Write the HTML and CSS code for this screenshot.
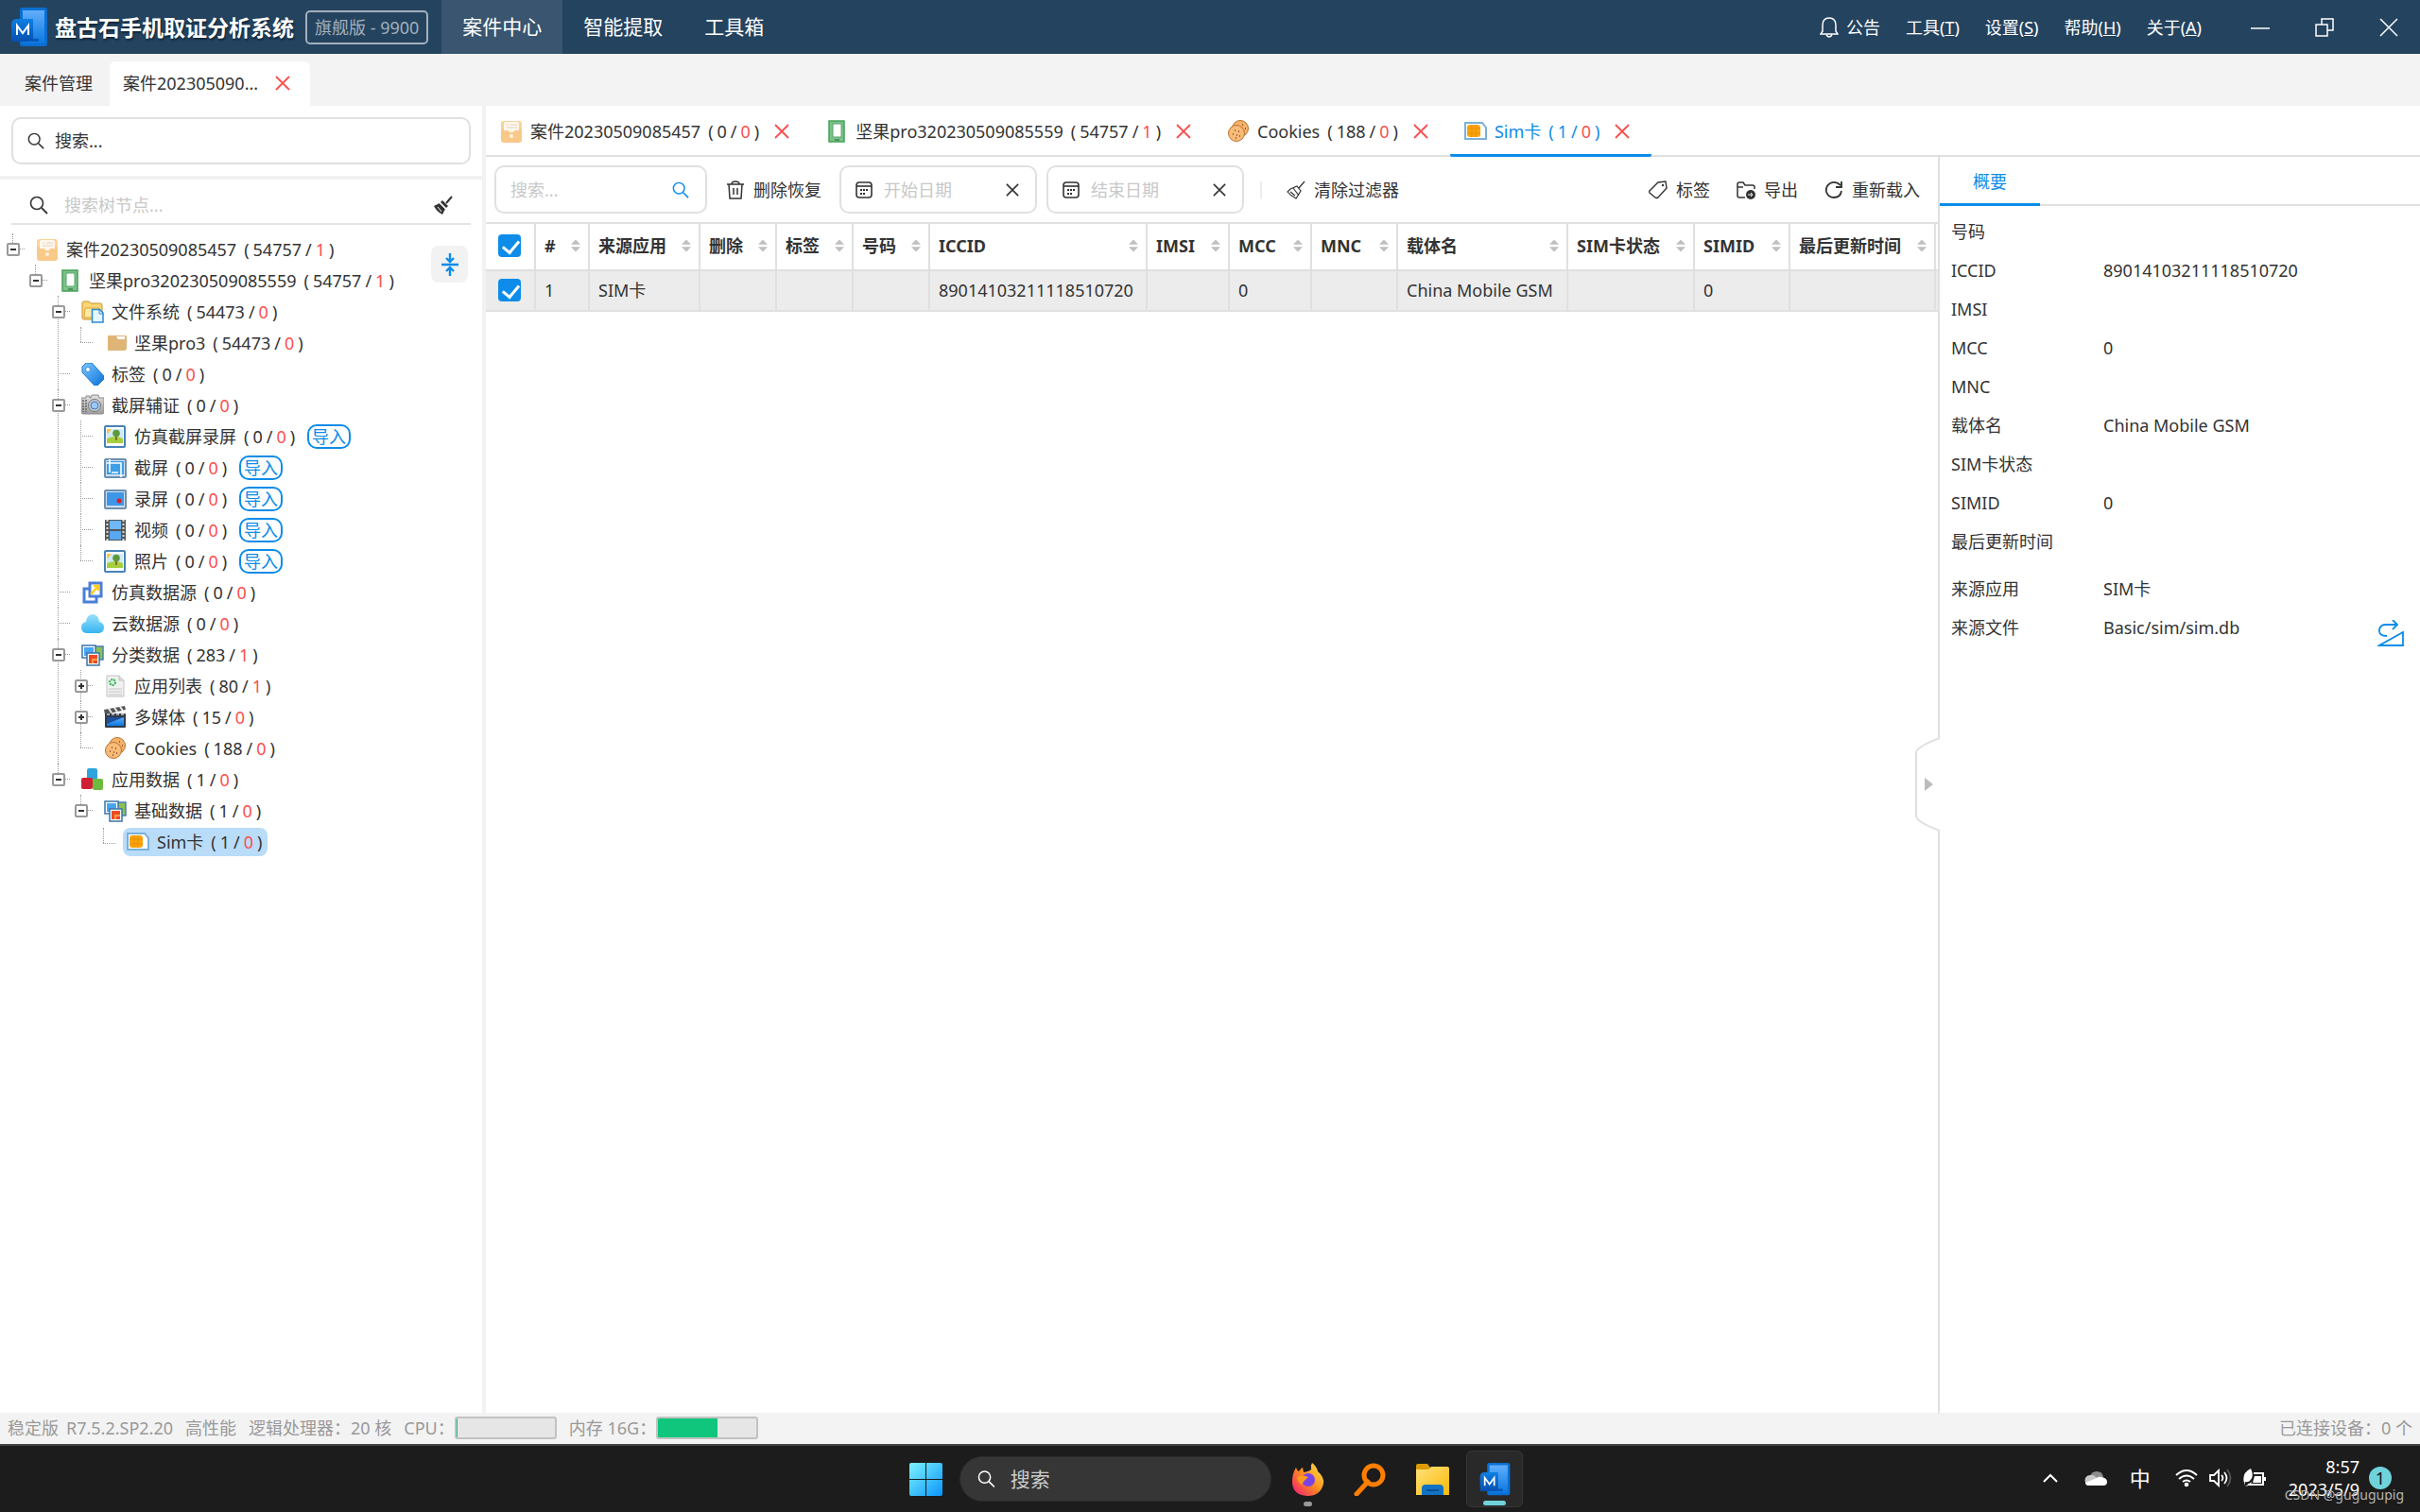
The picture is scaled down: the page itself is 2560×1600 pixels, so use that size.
FILE: index.html
```
<!DOCTYPE html>
<html lang="zh-CN">
<head>
  <meta charset="UTF-8" />
  <meta name="viewport" content="width=device-width, initial-scale=1.0"/>
  <title>盘古石手机取证分析系统</title>
  <link rel="stylesheet" href="styles.css">
</head>
<body>

  <!-- Icon sprite -->
  <svg class="sprite" width="0" height="0" aria-hidden="true">
    <defs>
      <linearGradient id="gBlue" x1="0" y1="0" x2="0" y2="1"><stop offset="0" stop-color="#62aefc"/><stop offset="1" stop-color="#0b78e0"/></linearGradient>
      <linearGradient id="gDeep" x1="0" y1="0" x2="0" y2="1"><stop offset="0" stop-color="#0d7fe4"/><stop offset="1" stop-color="#0650b0"/></linearGradient>
      <linearGradient id="gTag" x1="0" y1="0" x2="1" y2="1"><stop offset="0" stop-color="#7cc8ff"/><stop offset="1" stop-color="#0a72d8"/></linearGradient>
      <linearGradient id="gCloud" x1="0" y1="0" x2="0" y2="1"><stop offset="0" stop-color="#9be0fb"/><stop offset="1" stop-color="#35b5f0"/></linearGradient>
      <linearGradient id="gWin" x1="0" y1="0" x2="1" y2="1"><stop offset="0" stop-color="#7df3ff"/><stop offset="1" stop-color="#0a95fb"/></linearGradient>
      <linearGradient id="gFox" x1="1" y1="0" x2="0" y2="1"><stop offset="0" stop-color="#fff04a"/><stop offset=".5" stop-color="#ff8a1f"/><stop offset="1" stop-color="#f0147c"/></linearGradient>
      <linearGradient id="gFolder" x1="0" y1="0" x2="1" y2="1"><stop offset="0" stop-color="#ffe27a"/><stop offset="1" stop-color="#fbb90a"/></linearGradient>
      <linearGradient id="gCam" x1="0" y1="0" x2="0" y2="1"><stop offset="0" stop-color="#e2e2e2"/><stop offset="1" stop-color="#9c9c9c"/></linearGradient>
    </defs>
    <symbol id="i-logo" viewBox="0 0 38 42">
      <rect x="9" y="0" width="29" height="41" rx="3" fill="#0b6fd2"/>
      <rect x="12" y="3" width="23" height="35" fill="url(#gBlue)"/>
      <rect x="21" y="33" width="8" height="3" rx="1" fill="#0659b8"/>
      <path d="M6 12h17v20q0 4-5 4H2q-2 0-2-2V18q0-6 6-6z" fill="url(#gDeep)"/>
      <path d="M6 29V19l6 8 6-8v10" fill="none" stroke="#fff" stroke-width="2"/>
    </symbol>
    <symbol id="i-close" viewBox="0 0 16 16"><path d="M1 1l14 14M15 1L1 15" fill="none" stroke="currentColor" stroke-width="1.800"/></symbol>
    <symbol id="i-search" viewBox="0 0 20 20"><circle cx="8" cy="8" r="6.5" fill="none" stroke="currentColor" stroke-width="1.6"/><path d="M13 13l6 6" stroke="currentColor" stroke-width="1.8"/></symbol>
    <symbol id="i-bell" viewBox="0 0 20 22"><path d="M1 18h18l-2-3V9q0-8-7-8T3 9v6zM7 19q3 4 6 0" fill="none" stroke="currentColor" stroke-width="1.5"/></symbol>
    <symbol id="i-box" viewBox="0 0 24 24"><rect x="1" y="1" width="22" height="22" rx="3" fill="#fbd39b"/><path d="M1 9h22v12q0 3-3 3H4q-3 0-3-3z" fill="#f9c98a"/><path d="M4 4q0-2 2-2h12q2 0 2 2v7h-5l-1 2h-4l-1-2H4z" fill="#fff7ec"/><path d="M7 5h2M11 5h7M7 8h11" stroke="#eee0cf" stroke-width="1.5"/><circle cx="12" cy="17" r="2" fill="#fff2e0"/></symbol>
    <symbol id="i-phone" viewBox="0 0 24 24"><rect x="3" y="0" width="18" height="24" rx="1" fill="#6fba7d"/><rect x="4.500" y="1.500" width="15" height="21" fill="#7cc289" stroke="#58a468"/><rect x="8" y="4" width="9" height="14" fill="#fff" stroke="#58a468"/><path d="M10 21h5" stroke="#4b945a" stroke-width="2"/></symbol>
    <symbol id="i-fs" viewBox="0 0 24 24"><path d="M1 3q0-2 2-2h5l2 2h10q2 0 2 2v12q0 3-3 3H3q-2 0-2-2z" fill="#fbd673" stroke="#c9912c"/><path d="M4 8h15v10H3z" fill="#fde9a6" stroke="#dba53c"/><path d="M11.500 9.500h8l3.500 3.500v10H11.500z" fill="#e6f5ff" stroke="#2a8bd0" stroke-width="1.5"/><path d="M19 10v4h4" fill="none" stroke="#2a8bd0"/></symbol>
    <symbol id="i-folder" viewBox="0 0 24 24"><path d="M4 4h19q1 0 1 1v12q0 3-3 3H4z" fill="#dfb577"/><path d="M13 5h9v3h-7z" fill="#fff"/></symbol>
    <symbol id="i-label" viewBox="0 0 24 24"><path d="M1 4l4-4h6l13 14v3l-7 7h-3L1 10z" fill="url(#gTag)" stroke="#1c78cf"/><circle cx="7" cy="7" r="2.500" fill="#fff" stroke="#3f8fe0"/></symbol>
    <symbol id="i-camera" viewBox="0 0 24 24"><path d="M0 4h5V2h4v2h1l1-3h7l1 3h5v15q0 2-2 2H2q-2 0-2-2z" fill="url(#gCam)" stroke="#8a8a8a"/><path d="M2 6v13M5 6v13" stroke="#666" stroke-width="1.500" stroke-dasharray="2 1"/><circle cx="14" cy="12" r="6.500" fill="#c9c9c9" stroke="#777"/><circle cx="14" cy="12" r="4" fill="#9cc8fa" stroke="#3d79c6"/></symbol>
    <symbol id="i-photo" viewBox="0 0 24 24"><rect x="1" y="1" width="21" height="22" rx="1" fill="#fff" stroke="#4682b8" stroke-width="2"/><rect x="3" y="4" width="17" height="15" fill="#cfeafc"/><path d="M3 4h5l-5 6z" fill="#ffc53d"/><path d="M3 14q9-4 17 0v5H3z" fill="#a6cf3f"/><path d="M13 11v5" stroke="#7a4b22" stroke-width="1.500"/><circle cx="13" cy="8.500" r="3.800" fill="#5f9a3a"/></symbol>
    <symbol id="i-crop" viewBox="0 0 24 24"><rect x="1" y="3" width="22" height="19" rx="1" fill="#cfe0ee" stroke="#6c8fb0" stroke-width="2"/><rect x="3" y="5" width="18" height="14" fill="#3d9ee8"/><path d="M6 3v14M3 7h15v15M8 17h7" fill="none" stroke="#fff" stroke-width="1.600"/></symbol>
    <symbol id="i-rec" viewBox="0 0 24 24"><rect x="1" y="3" width="22" height="19" rx="1" fill="#cfe0ee" stroke="#6c8fb0" stroke-width="2"/><rect x="3" y="5" width="18" height="14" fill="#3d97e6"/><circle cx="16" cy="14" r="2.500" fill="#e01b24"/></symbol>
    <symbol id="i-film" viewBox="0 0 24 24"><rect x="1" y="1" width="22" height="22" fill="#555"/><rect x="6" y="2" width="12" height="9" fill="#6db8f7"/><rect x="6" y="13" width="12" height="9" fill="#57a8f0"/><path d="M3.500 1v22M20.500 1v22" stroke="#ddd" stroke-width="2" stroke-dasharray="2 2"/></symbol>
    <symbol id="i-copy" viewBox="0 0 24 24"><rect x="3" y="8" width="13" height="14" fill="#fff" stroke="#4a7fd8" stroke-width="3"/><rect x="9" y="2" width="12" height="14" fill="#fff" stroke="#4a7fd8" stroke-width="3"/><path d="M10 14l8-9m-5 0h5v5" fill="none" stroke="#ffcb1f" stroke-width="2.500"/></symbol>
    <symbol id="i-cloud" viewBox="0 0 24 24"><path d="M5 22Q0 21 0 16q0-5 5-6 1-8 7-8t7 8q5 1 5 6 0 5-5 6z" fill="url(#gCloud)"/></symbol>
    <symbol id="i-class" viewBox="0 0 24 24"><rect x="14" y="3" width="9" height="14" fill="#8cc152" stroke="#4a7fb0" stroke-width="1.500"/><rect x="1" y="2" width="14" height="13" fill="#fff" stroke="#3d74a8" stroke-width="1.500"/><rect x="3" y="4" width="10" height="9" fill="#48a7f5"/><rect x="6" y="10" width="13" height="13" fill="#fff" stroke="#3d74a8" stroke-width="1.500"/><rect x="8" y="12" width="9" height="9" fill="#ee4b23"/><path d="M12 21v-4h5" fill="none" stroke="#ff9a4a" stroke-width="2"/></symbol>
    <symbol id="i-doc" viewBox="0 0 24 24"><path d="M3 1h13l5 5v17H3z" fill="#f1f1f1" stroke="#c2c2c2"/><path d="M16 1v5h5" fill="#ddd" stroke="#c2c2c2"/><circle cx="9" cy="8" r="3" fill="#d4f3dc" stroke="#35b558" stroke-width="2" stroke-dasharray="2 1"/><path d="M5 15h14M5 18h14M5 21h14" stroke="#c6c6c6"/></symbol>
    <symbol id="i-clap" viewBox="0 0 24 24"><path d="M0 4l22-4 1 4-22 5z" fill="#555"/><path d="M5 3l3 4M11 2l3 4M17 1l3 4" stroke="#eee" stroke-width="2"/><rect x="1" y="8" width="22" height="15" rx="1" fill="#333c48"/><rect x="3" y="12" width="18" height="9" fill="url(#gBlue)"/><path d="M3 12h18L3 19z" fill="#1c4f9c"/><path d="M3 9h18" stroke="#ccc" stroke-width="1.500" stroke-dasharray="3 2"/></symbol>
    <symbol id="i-cookie" viewBox="0 0 24 24"><circle cx="14" cy="9" r="8.500" fill="#f6b26b" stroke="#b97330"/><circle cx="10" cy="14" r="8.500" fill="#f8bb78" stroke="#b97330"/><path d="M8 11h1M12 12h1M6 15h1M10 16h1M13 17h1M9 19h1M16 5h1M19 9h1" stroke="#7a4318" stroke-width="1.500"/></symbol>
    <symbol id="i-cubes" viewBox="0 0 24 24"><rect x="6" y="0" width="11" height="12" rx="2" fill="#2fa3dc"/><rect x="0" y="10" width="12" height="12" rx="2" fill="#d01f35"/><rect x="12" y="11" width="11" height="12" rx="2" fill="#6cbb3c"/></symbol>
    <symbol id="i-sim" viewBox="0 0 24 24"><path d="M1 3h18l4 5v12H1z" fill="#fff" stroke="#7ab0d8" stroke-width="2"/><rect x="3" y="5" width="14" height="13" rx="3" fill="#fba40a"/><path d="M3 9h14M3 14h14M8 5v13M12 5v13" stroke="#e8910a"/></symbol>
    <symbol id="i-broom" viewBox="0 0 20 20"><path d="M19 1l-6 7M4 9l7-3 4 5-5 8q-6-3-9-7zM7 8l6 8M4 12l5 4" fill="none" stroke="currentColor" stroke-width="1.200"/></symbol>
    <symbol id="i-broomf" viewBox="0 0 20 20"><path d="M19 1l-6 7" stroke="currentColor" stroke-width="2"/><path d="M9 5l6 6-2 2-6-6z" fill="currentColor"/><path d="M6 8l6 6-3 6Q3 17 0 11z" fill="currentColor"/><path d="M6 8l6 6M4 12l4 5" stroke="#fff"/></symbol>
    <symbol id="i-trash" viewBox="0 0 20 20"><path d="M1 4h18M6 4q0-3 4-3t4 3M3 4l1 15h12l1-15M8 8v7M12 8v7" fill="none" stroke="currentColor" stroke-width="1.500"/></symbol>
    <symbol id="i-cal" viewBox="0 0 18 18"><rect x="1" y="1" width="16" height="16" rx="3" fill="none" stroke="currentColor" stroke-width="1.600"/><path d="M1 5h16" stroke="currentColor" stroke-width="1.600"/><path d="M5 9h8M5 13h6" stroke="currentColor" stroke-width="2" stroke-dasharray="2 1"/></symbol>
    <symbol id="i-tag" viewBox="0 0 20 20"><path d="M1 11L10 2l8-1 1 7-9 10q-2 1-3 0l-6-5q-1-1 0-2z" fill="none" stroke="currentColor" stroke-width="1.400"/><circle cx="15" cy="5" r="1.200" fill="currentColor"/></symbol>
    <symbol id="i-export" viewBox="0 0 20 20"><path d="M9 18H3q-2 0-2-2V4q0-2 2-2h4l2 3h8q2 0 2 2v2M1 7h6" fill="none" stroke="currentColor" stroke-width="1.500"/><circle cx="15" cy="15" r="5" fill="currentColor"/><path d="M12 15h5m-2-2l2 2-2 2" fill="none" stroke="#fff"/></symbol>
    <symbol id="i-reload" viewBox="0 0 20 20"><path d="M17 5q-5-5-11-2-5 3-4 9 2 6 8 6 7 0 8-7M18 1v6h-6" fill="none" stroke="currentColor" stroke-width="1.800"/></symbol>
    <symbol id="i-collapse" viewBox="0 0 20 24"><path d="M1 12h18M10 0v8M6 5l4 4 4-4M10 24v-8M6 19l4-4 4 4" fill="none" stroke="currentColor" stroke-width="2.400"/></symbol>
    <symbol id="i-jump" viewBox="0 0 28 28"><path d="M10 17Q1 17 2 10q1-5 7-5h12M16 0l5 5-5 5M2 27h25V13z" fill="none" stroke="currentColor" stroke-width="1.800"/></symbol>
  </svg>

  <!-- Title bar -->
  <header class="titlebar">
    <svg class="logo"><use href="#i-logo"/></svg>
    <h1 class="app-name">盘古石手机取证分析系统</h1>
    <span class="edition">旗舰版 - 9900</span>
    <nav class="main-nav">
      <button class="nav-item active">案件中心</button>
      <button class="nav-item">智能提取</button>
      <button class="nav-item">工具箱</button>
    </nav>
    <div class="menu">
      <button><svg class="icon"><use href="#i-bell"/></svg>公告</button>
      <button>工具(<u>T</u>)</button>
      <button>设置(<u>S</u>)</button>
      <button>帮助(<u>H</u>)</button>
      <button>关于(<u>A</u>)</button>
    </div>
    <div class="window-buttons">
      <button aria-label="最小化"><svg viewBox="0 0 20 20"><path d="M0 11h20" stroke="#fff" stroke-width="1.500"/></svg></button>
      <button aria-label="还原"><svg viewBox="0 0 20 20"><path d="M1 7h12v12H1zM7 7V1h12v12h-6" fill="none" stroke="#fff" stroke-width="1.500"/></svg></button>
      <button aria-label="关闭"><svg viewBox="0 0 20 20"><path d="M1 1l18 18M19 1L1 19" stroke="#fff" stroke-width="1.500"/></svg></button>
    </div>
  </header>

  <!-- Case tabs -->
  <div class="case-tabs">
    <button class="case-tab">案件管理</button>
    <div class="case-tab active"><span>案件202305090...</span><button class="close" aria-label="关闭"><svg><use href="#i-close"/></svg></button></div>
  </div>

  <div class="workspace">
    <!-- Left: case tree -->
    <aside class="sidebar">
      <div class="global-search">
        <label class="search-box"><svg class="icon"><use href="#i-search"/></svg><input type="text" placeholder="搜索..." aria-label="搜索"></label>
      </div>
      <label class="tree-search"><svg class="icon"><use href="#i-search"/></svg><input type="text" placeholder="搜索树节点..." aria-label="搜索树节点"><button aria-label="清除"><svg class="icon broom"><use href="#i-broomf"/></svg></button></label>
      <button class="collapse-all" aria-label="全部折叠"><svg><use href="#i-collapse"/></svg></button>

      <ul class="tree">
        <li><div class="node"><button class="toggle" aria-label="折叠"></button><svg><use href="#i-box"/></svg><span>案件20230509085457</span><span class="count">(<b>54757</b>/<em>1</em>)</span></div>
          <ul>
            <li><div class="node"><button class="toggle" aria-label="折叠"></button><svg><use href="#i-phone"/></svg><span>坚果pro320230509085559</span><span class="count">(<b>54757</b>/<em>1</em>)</span></div>
              <ul>
                <li><div class="node"><button class="toggle" aria-label="折叠"></button><svg><use href="#i-fs"/></svg><span>文件系统</span><span class="count">(<b>54473</b>/<em>0</em>)</span></div>
                  <ul>
                    <li><div class="node leaf"><svg><use href="#i-folder"/></svg><span>坚果pro3</span><span class="count">(<b>54473</b>/<em>0</em>)</span></div></li>
                  </ul>
                </li>
                <li><div class="node leaf"><svg><use href="#i-label"/></svg><span>标签</span><span class="count">(<b>0</b>/<em>0</em>)</span></div></li>
                <li><div class="node"><button class="toggle" aria-label="折叠"></button><svg><use href="#i-camera"/></svg><span>截屏辅证</span><span class="count">(<b>0</b>/<em>0</em>)</span></div>
                  <ul>
                    <li><div class="node leaf"><svg><use href="#i-photo"/></svg><span>仿真截屏录屏</span><span class="count">(<b>0</b>/<em>0</em>)</span><button class="import">导入</button></div></li>
                    <li><div class="node leaf"><svg><use href="#i-crop"/></svg><span>截屏</span><span class="count">(<b>0</b>/<em>0</em>)</span><button class="import">导入</button></div></li>
                    <li><div class="node leaf"><svg><use href="#i-rec"/></svg><span>录屏</span><span class="count">(<b>0</b>/<em>0</em>)</span><button class="import">导入</button></div></li>
                    <li><div class="node leaf"><svg><use href="#i-film"/></svg><span>视频</span><span class="count">(<b>0</b>/<em>0</em>)</span><button class="import">导入</button></div></li>
                    <li><div class="node leaf"><svg><use href="#i-photo"/></svg><span>照片</span><span class="count">(<b>0</b>/<em>0</em>)</span><button class="import">导入</button></div></li>
                  </ul>
                </li>
                <li><div class="node leaf"><svg><use href="#i-copy"/></svg><span>仿真数据源</span><span class="count">(<b>0</b>/<em>0</em>)</span></div></li>
                <li><div class="node leaf"><svg><use href="#i-cloud"/></svg><span>云数据源</span><span class="count">(<b>0</b>/<em>0</em>)</span></div></li>
                <li><div class="node"><button class="toggle" aria-label="折叠"></button><svg><use href="#i-class"/></svg><span>分类数据</span><span class="count">(<b>283</b>/<em>1</em>)</span></div>
                  <ul>
                    <li><div class="node"><button class="toggle plus" aria-label="展开"></button><svg><use href="#i-doc"/></svg><span>应用列表</span><span class="count">(<b>80</b>/<em>1</em>)</span></div></li>
                    <li><div class="node"><button class="toggle plus" aria-label="展开"></button><svg><use href="#i-clap"/></svg><span>多媒体</span><span class="count">(<b>15</b>/<em>0</em>)</span></div></li>
                    <li><div class="node leaf"><svg><use href="#i-cookie"/></svg><span>Cookies</span><span class="count">(<b>188</b>/<em>0</em>)</span></div></li>
                  </ul>
                </li>
                <li><div class="node"><button class="toggle" aria-label="折叠"></button><svg><use href="#i-cubes"/></svg><span>应用数据</span><span class="count">(<b>1</b>/<em>0</em>)</span></div>
                  <ul>
                    <li><div class="node"><button class="toggle" aria-label="折叠"></button><svg><use href="#i-class"/></svg><span>基础数据</span><span class="count">(<b>1</b>/<em>0</em>)</span></div>
                      <ul>
                        <li><div class="node leaf selected"><svg><use href="#i-sim"/></svg><span>Sim卡</span><span class="count">(<b>1</b>/<em>0</em>)</span></div></li>
                      </ul>
                    </li>
                  </ul>
                </li>
              </ul>
            </li>
          </ul>
        </li>
      </ul>
    </aside>

    <main class="main">
      <!-- Open views -->
      <div class="view-tabs">
        <div class="view-tab"><svg><use href="#i-box"/></svg><span>案件20230509085457</span><span class="count">(<b>0</b>/<em>0</em>)</span><button class="close" aria-label="关闭"><svg><use href="#i-close"/></svg></button></div>
        <div class="view-tab"><svg><use href="#i-phone"/></svg><span>坚果pro320230509085559</span><span class="count">(<b>54757</b>/<em>1</em>)</span><button class="close" aria-label="关闭"><svg><use href="#i-close"/></svg></button></div>
        <div class="view-tab"><svg><use href="#i-cookie"/></svg><span>Cookies</span><span class="count">(<b>188</b>/<em>0</em>)</span><button class="close" aria-label="关闭"><svg><use href="#i-close"/></svg></button></div>
        <div class="view-tab active"><svg><use href="#i-sim"/></svg><span>Sim卡</span><span class="count">(<b>1</b>/<em>0</em>)</span><button class="close" aria-label="关闭"><svg><use href="#i-close"/></svg></button></div>
      </div>

      <div class="view">
        <section class="records">
          <div class="toolbar">
            <label class="field search"><input type="text" placeholder="搜索..." aria-label="搜索记录"><svg class="icon blue"><use href="#i-search"/></svg></label>
            <button class="tool trash"><svg class="icon"><use href="#i-trash"/></svg>删除恢复</button>
            <label class="field date"><svg class="icon"><use href="#i-cal"/></svg><input type="text" placeholder="开始日期" aria-label="开始日期"><button aria-label="清空"><svg class="clear"><use href="#i-close"/></svg></button></label>
            <label class="field date"><svg class="icon"><use href="#i-cal"/></svg><input type="text" placeholder="结束日期" aria-label="结束日期"><button aria-label="清空"><svg class="clear"><use href="#i-close"/></svg></button></label>
            <span class="divider"></span>
            <button class="tool"><svg class="icon"><use href="#i-broom"/></svg>清除过滤器</button>
            <div class="tools-right">
              <button class="tool"><svg class="icon"><use href="#i-tag"/></svg>标签</button>
              <button class="tool"><svg class="icon"><use href="#i-export"/></svg>导出</button>
              <button class="tool"><svg class="icon"><use href="#i-reload"/></svg>重新载入</button>
            </div>
          </div>

          <table class="grid">
            <colgroup>
              <col class="w-check"><col class="w-num"><col class="w-app"><col class="w-s"><col class="w-s"><col class="w-s"><col class="w-iccid"><col class="w-m"><col class="w-m"><col class="w-mnc"><col class="w-name"><col class="w-state"><col class="w-simid"><col class="w-time"><col>
            </colgroup>
            <thead>
              <tr>
                <th><input type="checkbox" checked aria-label="全选"></th>
                <th><span>#</span></th><th><span>来源应用</span></th><th><span>删除</span></th><th><span>标签</span></th><th><span>号码</span></th><th><span>ICCID</span></th><th><span>IMSI</span></th><th><span>MCC</span></th><th><span>MNC</span></th><th><span>载体名</span></th><th><span>SIM卡状态</span></th><th><span>SIMID</span></th><th><span>最后更新时间</span></th><th></th>
              </tr>
            </thead>
            <tbody>
              <tr>
                <td><input type="checkbox" checked aria-label="选择第1行"></td>
                <td>1</td><td>SIM卡</td><td></td><td></td><td></td><td>89014103211118510720</td><td></td><td>0</td><td></td><td>China Mobile GSM</td><td></td><td>0</td><td></td><td></td>
              </tr>
            </tbody>
          </table>
        </section>

        <!-- Right: record details -->
        <aside class="details">
          <button class="drawer-handle" aria-label="收起"><svg viewBox="0 0 26 98"><path d="M26 0Q2 9 1 15v68q1 6 25 15" fill="#fff" stroke="#e0e0e0" stroke-width="2"/><path d="M10 42l9 7-9 7z" fill="#bdbdbd"/></svg></button>
          <div class="detail-tabs"><button>概要</button></div>
          <dl>
            <dt>号码</dt><dd></dd>
            <dt>ICCID</dt><dd>89014103211118510720</dd>
            <dt>IMSI</dt><dd></dd>
            <dt>MCC</dt><dd>0</dd>
            <dt>MNC</dt><dd></dd>
            <dt>载体名</dt><dd>China Mobile GSM</dd>
            <dt>SIM卡状态</dt><dd></dd>
            <dt>SIMID</dt><dd>0</dd>
            <dt>最后更新时间</dt><dd></dd>
          </dl>
          <dl class="source">
            <dt>来源应用</dt><dd>SIM卡</dd>
            <dt>来源文件</dt><dd>Basic/sim/sim.db<button class="jump" aria-label="跳转"><svg><use href="#i-jump"/></svg></button></dd>
          </dl>
        </aside>
      </div>
    </main>
  </div>

  <!-- Status bar -->
  <footer class="statusbar">
    <span>稳定版</span><span>R7.5.2.SP2.20</span><span class="gap">高性能</span><span class="gap">逻辑处理器：20 核</span><span class="gap">CPU：</span>
    <span class="meter"><i style="width: 1%"></i></span>
    <span class="gap">内存 16G：</span>
    <span class="meter"><i style="width: 60%"></i></span>
    <span class="devices">已连接设备：0 个</span>
  </footer>

  <!-- Windows taskbar -->
  <div class="taskbar">
    <div class="apps">
      <button aria-label="开始"><svg viewBox="0 0 35 35"><path d="M2 0h15v17H0V2q0-2 2-2zM18 0h15q2 0 2 2v15H18zM0 18h17v17H2q-2 0-2-2zM18 18h17v15q0 2-2 2H18z" fill="url(#gWin)"/></svg></button>
      <label class="task-search"><svg><use href="#i-search"/></svg><input type="text" placeholder="搜索" aria-label="搜索 Windows"></label>
      <button class="running" aria-label="Firefox"><svg viewBox="0 0 35 35"><path d="M22 0q5 4 6 9 7 6 6 13-3 13-17 13Q1 34 1 20q0-9 4-15 1 3 3 4 3-4 4-4l1 5q6-1 8-3-1-4 1-7z" fill="url(#gFox)"/><circle cx="18" cy="18" r="7" fill="#7a43e6"/><path d="M6 15q6-3 12 0-5 4-7 8-5-3-5-8z" fill="#ff9a1f"/></svg></button>
      <button aria-label="Everything"><svg viewBox="0 0 35 35"><circle cx="21" cy="13" r="10" fill="none" stroke="#ff7e00" stroke-width="5"/><path d="M15 20L3 33" stroke="#ff7e00" stroke-width="5" stroke-linecap="round"/></svg></button>
      <button aria-label="文件资源管理器"><svg viewBox="0 0 35 35"><path d="M0 3q0-2 2-2h10l3 4v6H0z" fill="#dd9b06"/><path d="M0 7h13l3-3h17q2 0 2 2v28H0z" fill="url(#gFolder)"/><path d="M6 34V27q0-4 4-4h15q4 0 4 4v7z" fill="#1273c4"/><path d="M11 29h13" stroke="#0b4f92" stroke-width="2"/></svg></button>
      <button class="current" aria-label="盘古石手机取证分析系统"><svg><use href="#i-logo"/></svg></button>
    </div>
    <div class="tray">
      <svg class="chevron" viewBox="0 0 16 10"><path d="M1 9l7-7 7 7" fill="none" stroke="#fff" stroke-width="2"/></svg>
      <svg class="onedrive" viewBox="0 0 24 16"><path d="M6 7q1-6 7-6t7 6l-3 4z" fill="#8d8d8d"/><path d="M1 13Q-1 6 6 5q4-1 7 3l-6 7z" fill="#cacaca"/><path d="M3 16q-2-1-2-3l12-5q2-2 5-1 6 1 6 5 0 4-4 4z" fill="#fff"/></svg>
      <span class="ime">中</span>
      <svg class="status-icon" viewBox="0 0 24 20"><path d="M1 7q11-10 22 0M4 11q8-7 16 0M8 14q4-3 8 0" fill="none" stroke="#fff" stroke-width="2"/><circle cx="12" cy="17" r="2.300" fill="#fff"/></svg>
      <svg class="status-icon" viewBox="0 0 24 20"><path d="M1 7h4l5-5v16l-5-5H1zM13 7q3 3 0 6M16 4q5 6 0 12" fill="none" stroke="#fff" stroke-width="1.800"/><path d="M19 1q7 9 0 18" fill="none" stroke="#555" stroke-width="1.800"/></svg>
      <svg class="status-icon" viewBox="0 0 24 20"><path d="M11 5h10v12H5M23 9v4" fill="none" stroke="#fff" stroke-width="2"/><path d="M12 8h7v7h-9zM1 15Q-2 5 8 0q4 9-1 13-3 2-5 1l-1 4M9 14q-1 4-7 5" fill="#fff"/></svg>
      <div class="clock"><time>8:57</time><time>2023/5/9</time></div>
      <span class="badge">1</span>
    </div>
    <span class="watermark">CSDN @gugugupig</span>
  </div>

</body>
</html>
```

FILE: styles.css
```
* {
  box-sizing: border-box;
}

body {
  margin: 0;
  height: 100vh;
  display: flex;
  flex-direction: column;
  overflow: hidden;
  background: #fff;
  color: #333;
  font-family: "Noto Sans", "Noto Sans CJK SC", sans-serif;
  font-size: 18px;
  line-height: 24px;
}

.sprite {
  position: absolute;
}

button {
  display: flex;
  align-items: center;
  margin: 0;
  padding: 0;
  border: 0;
  background: none;
  color: inherit;
  font: inherit;
  white-space: nowrap;
}

input {
  min-width: 0;
  border: 0;
  padding: 0;
  outline: 0;
  background: none;
  color: inherit;
  font: inherit;
}

input::placeholder {
  color: #c8c8c8;
}

ul {
  list-style: none;
  margin: 0;
  padding: 0;
}

.icon {
  width: 20px;
  height: 20px;
  flex: none;
}

.close svg {
  width: 16px;
  height: 16px;
  color: #fb4f4f;
}

/* "(total/deleted)" counters */
.count {
  display: flex;
  gap: 4px;
}

.count b {
  font-weight: normal;
}

.count em {
  color: #fb4f4f;
  font-style: normal;
}

/* Title bar */
.titlebar {
  display: flex;
  align-items: center;
  height: 57px;
  flex: none;
  padding-left: 12px;
  background: #24435f;
  color: #fff;
}

.logo {
  width: 38px;
  height: 42px;
}

.app-name {
  margin: 0 12px 0 8px;
  font-size: 23px;
  text-shadow: 1px 2px 2px #12263a;
}

.edition {
  padding: 4px 8px;
  border: 2px solid #a3b0bc;
  border-radius: 5px;
  color: #a3b0bc;
}

.main-nav {
  display: flex;
  align-self: stretch;
  margin-left: 14px;
}

.nav-item {
  padding: 0 22px 2px;
  font-size: 21px;
}

.nav-item.active {
  background: #3a556f;
}

.menu {
  display: flex;
  gap: 27px;
  margin-left: auto;
}

.menu .icon {
  width: 20px;
  height: 22px;
  margin-right: 8px;
}

.window-buttons {
  display: flex;
  gap: 48px;
  margin: 0 23px 0 52px;
}

.window-buttons svg {
  width: 20px;
  height: 20px;
}

/* Case tabs */
.case-tabs {
  display: flex;
  align-items: flex-end;
  height: 55px;
  flex: none;
  background: #f3f3f3;
}

.case-tab {
  display: flex;
  align-items: center;
  gap: 18px;
  height: 47px;
  padding: 0 18px 2px 26px;
}

.case-tab.active {
  padding: 0 21px 2px 14px;
  border-radius: 6px 6px 0 0;
  background: #fff;
}

.workspace {
  display: flex;
  flex: 1;
  min-height: 0;
}

/* Sidebar */
.sidebar {
  position: relative;
  width: 514px;
  flex: none;
  border-right: 4px solid #f2f2f2;
}

.global-search {
  padding: 12px;
  border-bottom: 4px solid #f2f2f2;
}

.search-box {
  display: flex;
  align-items: center;
  gap: 11px;
  height: 50px;
  padding: 0 15px;
  border: 2px solid #e0e0e0;
  border-radius: 10px;
}

.search-box .icon {
  width: 18px;
  height: 18px;
}

.search-box input {
  flex: 1;
}

.search-box input::placeholder {
  color: #333;
}

.tree-search {
  display: flex;
  align-items: center;
  gap: 17px;
  height: 48px;
  margin: 0 12px;
  padding: 8px 19px 0;
  border-bottom: 2px solid #e4e4e4;
}

.tree-search input {
  flex: 1;
}

.tree {
  padding: 9px 0 0 7px;
}

.tree ul {
  margin-left: 24px;
}

.tree li {
  position: relative;
}

/* Dotted connectors between nodes */
.tree li::before {
  content: "";
  position: absolute;
  left: 6px;
  top: 0;
  bottom: 0;
  border-left: 1px dotted #999;
}

.tree li:last-child::before {
  bottom: auto;
  height: 16px;
}

.tree li::after {
  content: "";
  position: absolute;
  left: 6px;
  top: 16px;
  width: 13px;
  border-top: 1px dotted #999;
}

.node {
  display: flex;
  align-items: center;
  gap: 8px;
  height: 33px;
  white-space: nowrap;
}

.node > svg {
  width: 24px;
  height: 24px;
}

.node.leaf {
  padding-left: 31px;
}

.toggle {
  position: relative;
  z-index: 1;
  justify-content: center;
  width: 14px;
  height: 14px;
  margin-right: 9px;
  border: 2px solid #999;
  border-radius: 2px;
  background: #fff;
}

.toggle::before {
  content: "";
  width: 6px;
  height: 2px;
  background: #333;
}

.toggle.plus::after {
  content: "";
  position: absolute;
  width: 2px;
  height: 6px;
  background: #333;
}

.node.selected {
  width: max-content;
  height: 30px;
  margin: 2px 0 0 27px;
  padding: 0 6px 0 4px;
  border-radius: 8px;
  background: #b9dcf9;
}

.import {
  height: 26px;
  margin-left: 5px;
  padding: 0 3px;
  border: 2px solid #0d8ce9;
  border-radius: 10px;
  color: #0d8ce9;
}

.collapse-all {
  position: absolute;
  top: 148px;
  right: 15px;
  justify-content: center;
  width: 39px;
  height: 39px;
  border-radius: 8px;
  background: #f2f2f2;
  color: #0d8ce9;
}

.collapse-all svg {
  width: 20px;
  height: 24px;
}

/* View tabs */
.main {
  display: flex;
  flex-direction: column;
  flex: 1;
  min-width: 0;
}

.view-tabs {
  display: flex;
  height: 54px;
  border-bottom: 2px solid #e0e0e0;
}

.view-tab {
  display: flex;
  align-items: center;
  gap: 8px;
  height: 54px;
  padding: 3px 23px 0 15px;
  border-bottom: 3px solid transparent;
}

.view-tab > svg {
  width: 24px;
  height: 24px;
}

.view-tab .close {
  margin-left: 8px;
}

.view-tab.active {
  border-color: #0d8ce9;
  border-radius: 2px;
  color: #0d8ce9;
}

.view {
  display: flex;
  flex: 1;
  min-height: 0;
}

.records {
  flex: 1;
  min-width: 0;
}

/* Toolbar */
.toolbar {
  display: flex;
  align-items: center;
  height: 69px;
  padding: 0 19px 0 9px;
}

.field {
  display: flex;
  align-items: center;
  height: 51px;
  margin-right: 10px;
  padding: 0 17px 0 15px;
  border: 2px solid #e0e0e0;
  border-radius: 10px;
}

.field .icon {
  width: 18px;
  height: 18px;
}

.field.search {
  width: 225px;
  margin-right: 20px;
}

.field.date {
  width: 209px;
  gap: 12px;
}

.field input {
  flex: 1;
}

.blue {
  color: #0d8ce9;
}

.clear {
  width: 14px;
  height: 14px;
}

.tool {
  gap: 9px;
}

.tool.trash {
  margin-right: 19px;
}

.divider {
  height: 18px;
  margin: 0 26px 0 7px;
  border-left: 2px solid #ececec;
}

.tools-right {
  display: flex;
  gap: 28px;
  margin-left: auto;
}

/* Record table */
.grid {
  width: 100%;
  table-layout: fixed;
  border-collapse: separate;
  border-spacing: 0;
  border-top: 2px solid #e0e0e0;
}

.w-check { width: 53px; }
.w-num { width: 57px; }
.w-app { width: 117px; }
.w-s { width: 81px; }
.w-iccid { width: 230px; }
.w-m { width: 87px; }
.w-mnc { width: 91px; }
.w-name { width: 180px; }
.w-state { width: 134px; }
.w-simid { width: 101px; }
.w-time { width: 154px; }

.grid th,
.grid td {
  padding: 0 0 2px 9px;
  border-right: 2px solid #e0e0e0;
  border-bottom: 2px solid #e0e0e0;
  text-align: left;
  white-space: nowrap;
}

.grid th:last-child,
.grid td:last-child {
  padding: 0;
  border-right: 0;
}

.grid th {
  height: 50px;
}

.grid th span {
  display: flex;
  align-items: center;
  justify-content: space-between;
}

/* Sort arrows */
.grid th span::after {
  content: "";
  width: 10px;
  height: 13px;
  margin-right: 8px;
  background: #c0c0c0;
  clip-path: polygon(50% 0, 100% 40%, 0 40%, 50% 0, 50% 100%, 0 60%, 100% 60%, 50% 100%);
}

.grid td {
  height: 43px;
  background: #ececec;
}

.grid th:first-child,
.grid td:first-child {
  padding-left: 13px;
}

.grid input {
  display: block;
  appearance: none;
  width: 24px;
  height: 24px;
  margin: 0;
  border-radius: 4px;
  background: #0d8ce9;
}

.grid input:checked::before {
  content: "";
  display: block;
  width: 8px;
  height: 14px;
  margin: 3px 8px;
  border: solid #fff;
  border-width: 0 3px 3px 0;
  transform: rotate(40deg);
}

/* Details */
.details {
  position: relative;
  width: 510px;
  flex: none;
  border-left: 2px solid #e0e0e0;
}

.detail-tabs {
  height: 52px;
  border-bottom: 2px solid #e0e0e0;
}

.detail-tabs button {
  height: 52px;
  padding: 3px 35px 0;
  border-bottom: 3px solid #0d8ce9;
  color: #0d8ce9;
}

.details dl {
  display: grid;
  grid-template-columns: 161px 1fr;
  grid-auto-rows: 41px;
  align-items: center;
  margin: 6px 0 0;
  padding: 0 17px 0 12px;
}

.details .source {
  margin-top: 9px;
}

.details dd {
  display: flex;
  justify-content: space-between;
  margin: 0;
}

.jump {
  height: 24px;
  padding-top: 12px;
  color: #0d8ce9;
}

.jump svg {
  width: 28px;
  height: 28px;
}

.drawer-handle {
  position: absolute;
  left: -26px;
  top: 615px;
}

.drawer-handle svg {
  width: 26px;
  height: 98px;
}

/* Status bar */
.statusbar {
  display: flex;
  align-items: center;
  gap: 8px;
  height: 33px;
  flex: none;
  padding: 0 8px 2px;
  background: #f3f3f3;
  color: #999;
  white-space: nowrap;
}

.statusbar .gap {
  margin-left: 5px;
}

.meter {
  width: 108px;
  height: 24px;
  margin-left: -8px;
  overflow: hidden;
  border: 2px solid #c2c2c2;
  border-radius: 3px;
  background: #e6e6e6;
}

.meter i {
  display: block;
  height: 100%;
  background: #10c67c;
}

.devices {
  margin-left: auto;
}

/* Taskbar */
.taskbar {
  position: relative;
  display: flex;
  align-items: center;
  justify-content: center;
  height: 72px;
  flex: none;
  border-top: 2px solid #444;
  background: #1c1c1c;
  color: #fff;
}

.apps {
  display: flex;
  align-items: center;
  gap: 6px;
}

.apps button {
  position: relative;
  justify-content: center;
  width: 60px;
  height: 60px;
  border-radius: 6px;
}

.apps svg {
  width: 35px;
  height: 35px;
}

.task-search {
  display: flex;
  align-items: center;
  gap: 16px;
  width: 330px;
  height: 48px;
  margin: 0 2px 0 0;
  padding: 0 18px;
  border: 1px solid #2b2b2b;
  border-radius: 24px;
  background: #363636;
  font-size: 21px;
}

.task-search svg {
  width: 22px;
  height: 22px;
}

.task-search input::placeholder {
  color: #ccc;
}

.apps .current {
  border: 1px solid #363636;
  background: #292929;
}

.running::after,
.current::after {
  content: "";
  position: absolute;
  bottom: 1px;
  width: 9px;
  height: 5px;
  border-radius: 3px;
  background: #999;
}

.current::after {
  width: 24px;
  background: #6fd3dc;
}

.tray {
  position: absolute;
  right: 30px;
  top: 9px;
  display: flex;
  align-items: center;
  height: 50px;
}

.chevron {
  width: 16px;
  height: 10px;
  margin-right: 28px;
}

.onedrive {
  width: 24px;
  height: 16px;
  margin-right: 24px;
}

.ime {
  margin-right: 26px;
  font-size: 22px;
}

.status-icon {
  width: 24px;
  height: 20px;
  margin-right: 12px;
}

.clock {
  display: flex;
  flex-direction: column;
  margin: 0 10px 0 12px;
  text-align: right;
}

.badge {
  width: 24px;
  height: 24px;
  border-radius: 50%;
  background: #6fd3dc;
  color: #111;
  text-align: center;
}

.watermark {
  position: absolute;
  right: 17px;
  bottom: 6px;
  color: #b4b4b4;
  font-size: 14px;
}
```
